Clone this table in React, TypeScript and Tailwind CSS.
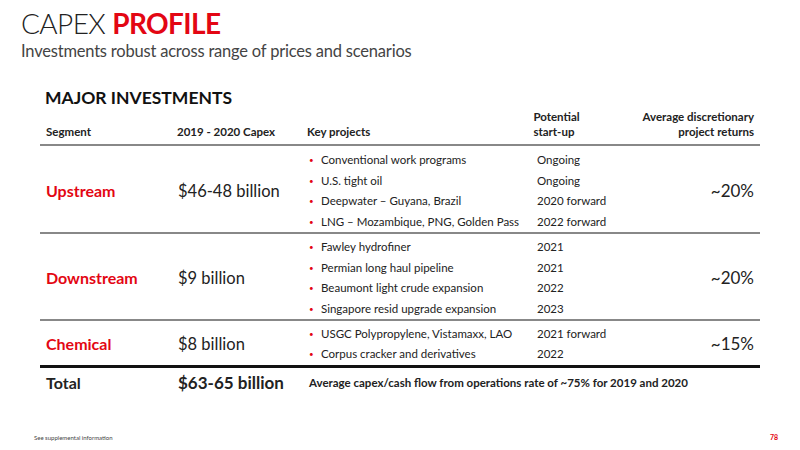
const font = { fontFamily: 'Lato, "Noto Sans", sans-serif' };

type Group = {
  segment: string;
  capex: string;
  items: [string, string][];
  returns: string;
  height: string;
};

const groups: Group[] = [
  {
    segment: "Upstream",
    capex: "$46-48 billion",
    items: [
      ["Conventional work programs", "Ongoing"],
      ["U.S. tight oil", "Ongoing"],
      ["Deepwater – Guyana, Brazil", "2020 forward"],
      ["LNG – Mozambique, PNG, Golden Pass", "2022 forward"],
    ],
    returns: "~20%",
    height: "h-[88px] pt-[4px]",
  },
  {
    segment: "Downstream",
    capex: "$9 billion",
    items: [
      ["Fawley hydrofiner", "2021"],
      ["Permian long haul pipeline", "2021"],
      ["Beaumont light crude expansion", "2022"],
      ["Singapore resid upgrade expansion", "2023"],
    ],
    returns: "~20%",
    height: "h-[87px] pt-[3px]",
  },
  {
    segment: "Chemical",
    capex: "$8 billion",
    items: [
      ["USGC Polypropylene, Vistamaxx, LAO", "2021 forward"],
      ["Corpus cracker and derivatives", "2022"],
    ],
    returns: "~15%",
    height: "h-[47px] pt-[2px]",
  },
];

export default function App() {
  return (
    <div className="w-[800px] h-[450px] bg-white text-[#222] relative overflow-hidden" style={font}>
      <div className="pl-[21px] pt-[6px]">
        <h1 className="text-[28px] leading-[34px] tracking-[-0.6px]">
          <span className="font-light">CAPEX </span>
          <span className="font-bold text-[#e30613]">PROFILE</span>
        </h1>
        <p className="text-[16.5px] leading-[22px] text-[#444] tracking-[-0.2px]">
          Investments robust across range of prices and scenarios
        </p>
      </div>

      <div className="mx-[40px] w-[720px] mt-[25px]">
        <h2 className="pl-[5px] text-[17.5px] leading-[22px] font-bold text-[#111]">MAJOR INVESTMENTS</h2>

        <div className="flex items-end h-[37px] pb-[5px] border-b-2 border-[#888] text-[11.5px] leading-[15px] font-bold whitespace-nowrap">
          <div className="w-[138px] pl-[6px]">Segment</div>
          <div className="w-[131px]">2019 - 2020 Capex</div>
          <div className="w-[228px]">Key projects</div>
          <div className="w-[110px]">Potential<br />start-up</div>
          <div className="flex-1 text-right pr-[6px]">Average discretionary<br />project returns</div>
        </div>

        {groups.map((g, i) => (
          <div
            key={g.segment}
            className={`flex items-center ${g.height} ${i === groups.length - 1 ? "border-b-[3px] border-[#111]" : "border-b-2 border-[#888]"}`}
          >
            <div className="w-[138px] pl-[6px] text-[16px] font-bold text-[#e30613]">{g.segment}</div>
            <div className="w-[131px] text-[16.5px]">{g.capex}</div>
            <div className="w-[338px] flex flex-col gap-[4px] text-[11.5px] leading-[16.5px]">
              {g.items.map(([p, d]) => (
                <div key={p} className="flex whitespace-nowrap">
                  <div className="w-[228px] flex items-center">
                    <span className="w-[12px] text-[#e30613] text-[8px]">•</span>
                    <span>{p}</span>
                  </div>
                  <div>{d}</div>
                </div>
              ))}
            </div>
            <div className="flex-1 text-right pr-[6px] text-[17px]">{g.returns}</div>
          </div>
        ))}

        <div className="flex items-center h-[30px] whitespace-nowrap">
          <div className="w-[138px] pl-[6px] text-[16px] font-bold">Total</div>
          <div className="w-[131px] text-[17px] font-bold">$63-65 billion</div>
          <div className="flex-1 text-[11.5px] font-bold">
            Average capex/cash flow from operations rate of ~75% for 2019 and 2020
          </div>
        </div>
      </div>

      <div className="absolute bottom-[8px] left-[34px] right-[22px] flex justify-between items-end text-[6px] text-[#444]">
        <span>See supplemental information</span>
        <span className="text-[#e30613] font-bold text-[7px]">78</span>
      </div>
    </div>
  );
}
